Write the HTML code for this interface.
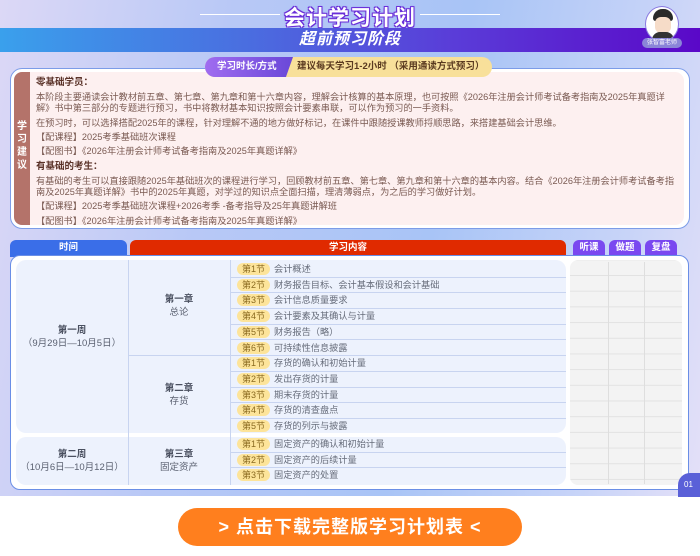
<!DOCTYPE html>
<html><head><meta charset="utf-8"><style>
*{margin:0;padding:0;box-sizing:border-box}
body{width:700px;height:556px;overflow:hidden;position:relative;font-family:"Liberation Sans","Noto Sans CJK SC",sans-serif;background:#fff}
.bg{position:absolute;left:0;top:0;width:700px;height:496px;background:linear-gradient(100deg,#dcd8f6 0%,#b8c8f6 30%,#a8c4f6 60%,#c8d4f8 85%,#e4e0f8 100%)}
.abs{position:absolute}
.title{left:0;width:700px;top:2px;text-align:center;font-size:21px;font-weight:bold;color:#fff;letter-spacing:1px;text-shadow:0 0 2px #6a2fd8,1px 1px 0 #6a2fd8,-1px -1px 0 #6a2fd8,1px -1px 0 #6a2fd8,-1px 1px 0 #6a2fd8}
.line{height:1px;background:#fff;top:14px}
.band{left:0;top:28px;width:700px;height:24px;background:linear-gradient(90deg,#3aa0ec 0%,#4a6ee0 35%,#5a3cd8 65%,#5a08c8 100%)}
.band span{display:block;text-align:center;color:#fff;font-size:16px;font-weight:bold;font-style:italic;line-height:24px;letter-spacing:1px}
.adv{left:10px;top:68px;width:680px;height:161px;background:#fff;border:1.5px solid #7c9ce8;border-radius:12px}
.advin{left:14px;top:72px;width:670px;height:153px;background:#fdf0f0;border-radius:9px}
.strip{left:14px;top:72px;width:16px;height:153px;background:#b4736a;border-radius:8px 0 0 8px;color:#fff;font-size:10px;font-weight:bold;text-align:center;padding-top:48px;line-height:13px}
.txt{left:36px;top:77px;font-size:9.2px;color:#7a5a52;white-space:nowrap;line-height:10.8px}
.txt p{margin-bottom:3.6px}
.txt b{color:#5a3228;font-size:9.5px}
.pill{top:57px;height:20px;border-radius:10px;overflow:hidden;left:205px;width:287px;background:#f8e09a;font-size:9.5px;font-weight:bold}
.pill .a{position:absolute;left:0;top:0;width:88px;height:20px;background:linear-gradient(90deg,#a06cf0,#6a48d8);color:#fff;line-height:20px;padding-left:12px;clip-path:polygon(0 0,100% 0,92% 100%,0 100%)}
.pill .b{position:absolute;left:92px;top:0;line-height:20px;color:#5a3a20}
.th{top:240px;height:17px;border-radius:6px 6px 0 0;color:#fff;font-size:9.5px;font-weight:bold;text-align:center;line-height:16px}
.tbl{left:10px;top:255px;width:679px;height:235px;background:#fff;border:1.5px solid #6a8ee6;border-radius:10px}
.pan{background:#edf2fd;border-radius:10px}
.cell{color:#5a6070;font-size:9.5px;text-align:center;line-height:13px}
.cell b{color:#4a5060}
.row{left:230px;width:336px;height:15.7px;border-bottom:1px solid #c8d4f0;font-size:9.2px;color:#666c7a;line-height:15px}
.row i{font-style:normal;display:inline-block;background:#fde49a;color:#8a6a20;border-radius:7px;padding:0 5px;margin:0 4px 0 7px;line-height:12px;font-size:9px}
.vl{width:1px;background:#c8d4f0}
.grid{left:570px;top:260px;width:112px;height:225px;background:#f3f3f3;border-radius:8px;background-image:linear-gradient(#e2e2e2 1px,transparent 1px);background-size:100% 15.7px;background-position:0 15px}
.btn{left:178px;top:508px;width:344px;height:38px;border-radius:19px;background:#ff7f1e;color:#fff;font-size:18px;font-weight:bold;text-align:center;line-height:38px;letter-spacing:1px}
</style></head><body>
<div class="bg"></div>
<div class="abs line" style="left:200px;width:80px"></div>
<div class="abs line" style="left:420px;width:80px"></div>
<div class="abs title">会计学习计划</div>
<div class="abs band"><span>超前预习阶段</span></div>
<div class="abs" style="left:645px;top:6px;width:34px;height:36px;border-radius:50%;background:#fff;border:1.5px solid #8a7ae0;overflow:hidden">
<div style="position:absolute;left:7px;top:2px;width:20px;height:12px;background:#2a2a2a;border-radius:10px 10px 3px 3px"></div>
<div style="position:absolute;left:9px;top:10px;width:16px;height:16px;background:#f6dcc8;border-radius:6px"></div>
<div style="position:absolute;left:6px;top:25px;width:22px;height:14px;background:#333;border-radius:8px 8px 0 0"></div>
</div>
<div class="abs" style="left:642px;top:38px;width:40px;height:10px;border-radius:5px;background:#8a84d8;color:#fff;font-size:6px;text-align:center;line-height:10px">张智富老师</div>
<div class="abs adv"></div>
<div class="abs advin"></div>
<div class="abs strip">学<br>习<br>建<br>议</div>
<div class="abs pill"><div class="a">学习时长/方式</div><div class="b">建议每天学习1-2小时 （采用通读方式预习）</div></div>
<div class="abs txt">
<p><b>零基础学员：</b></p>
<p>本阶段主要通读会计教材前五章、第七章、第九章和第十六章内容，理解会计核算的基本原理，也可按照《2026年注册会计师考试备考指南及2025年真题详<br>解》书中第三部分的专题进行预习，书中将教材基本知识按照会计要素串联，可以作为预习的一手资料。</p>
<p>在预习时，可以选择搭配2025年的课程，针对理解不通的地方做好标记，在课件中跟随授课教师捋顺思路，来搭建基础会计思维。</p>
<p>【配课程】2025考季基础班次课程</p>
<p>【配图书】《2026年注册会计师考试备考指南及2025年真题详解》</p>
<p><b>有基础的考生：</b></p>
<p>有基础的考生可以直接跟随2025年基础班次的课程进行学习，回顾教材前五章、第七章、第九章和第十六章的基本内容。结合《2026年注册会计师考试备考指<br>南及2025年真题详解》书中的2025年真题，对学过的知识点全面扫描，理清薄弱点，为之后的学习做好计划。</p>
<p>【配课程】2025考季基础班次课程+2026考季 -备考指导及25年真题讲解班</p>
<p>【配图书】《2026年注册会计师考试备考指南及2025年真题详解》</p>
</div>
<div class="abs th" style="left:10px;width:117px;background:#3a6ee8">时间</div>
<div class="abs th" style="left:130px;width:436px;background:#e02a00">学习内容</div>
<div class="abs th" style="left:573px;width:32px;background:#7a48f0">听课</div>
<div class="abs th" style="left:609px;width:32px;background:#7a48f0">做题</div>
<div class="abs th" style="left:645px;width:32px;background:#7a48f0">复盘</div>
<div class="abs tbl"></div>
<div class="abs pan" style="left:16px;top:260px;width:550px;height:173px"></div>
<div class="abs pan" style="left:16px;top:437px;width:550px;height:48px"></div>
<div class="abs vl" style="left:128px;top:260px;height:225px"></div>
<div class="abs vl" style="left:230px;top:260px;height:225px"></div>
<div class="abs" style="left:128px;top:355px;width:102px;height:1px;background:#c8d4f0"></div>
<div class="abs cell" style="left:16px;top:324px;width:112px"><b>第一周</b><br>（9月29日—10月5日）</div>
<div class="abs cell" style="left:128px;top:293px;width:102px"><b>第一章</b><br>总论</div>
<div class="abs cell" style="left:128px;top:382px;width:102px"><b>第二章</b><br>存货</div>
<div class="abs cell" style="left:16px;top:448px;width:112px"><b>第二周</b><br>（10月6日—10月12日）</div>
<div class="abs cell" style="left:128px;top:448px;width:102px"><b>第三章</b><br>固定资产</div>
<div class="abs row" style="top:262px"><i>第1节</i>会计概述</div>
<div class="abs row" style="top:277.7px"><i>第2节</i>财务报告目标、会计基本假设和会计基础</div>
<div class="abs row" style="top:293.4px"><i>第3节</i>会计信息质量要求</div>
<div class="abs row" style="top:309.1px"><i>第4节</i>会计要素及其确认与计量</div>
<div class="abs row" style="top:324.8px"><i>第5节</i>财务报告（略）</div>
<div class="abs row" style="top:340.5px"><i>第6节</i>可持续性信息披露</div>
<div class="abs row" style="top:356.2px"><i>第1节</i>存货的确认和初始计量</div>
<div class="abs row" style="top:371.9px"><i>第2节</i>发出存货的计量</div>
<div class="abs row" style="top:387.6px"><i>第3节</i>期末存货的计量</div>
<div class="abs row" style="top:403.3px"><i>第4节</i>存货的清查盘点</div>
<div class="abs row" style="top:419px;border:none"><i>第5节</i>存货的列示与披露</div>
<div class="abs row" style="top:437px"><i>第1节</i>固定资产的确认和初始计量</div>
<div class="abs row" style="top:452.7px"><i>第2节</i>固定资产的后续计量</div>
<div class="abs row" style="top:468.4px;border:none"><i>第3节</i>固定资产的处置</div>
<div class="abs grid"></div>
<div class="abs" style="left:608px;top:262px;width:1px;height:222px;background:#dedede"></div>
<div class="abs" style="left:644px;top:262px;width:1px;height:222px;background:#dedede"></div>
<div class="abs" style="left:678px;top:473px;width:26px;height:24px;border-radius:12px 0 0 0;background:#5a60d8;color:#fff;font-size:8px;line-height:24px;padding-left:6px">01</div>
<div class="abs btn">&gt; 点击下载完整版学习计划表 &lt;</div>
</body></html>
